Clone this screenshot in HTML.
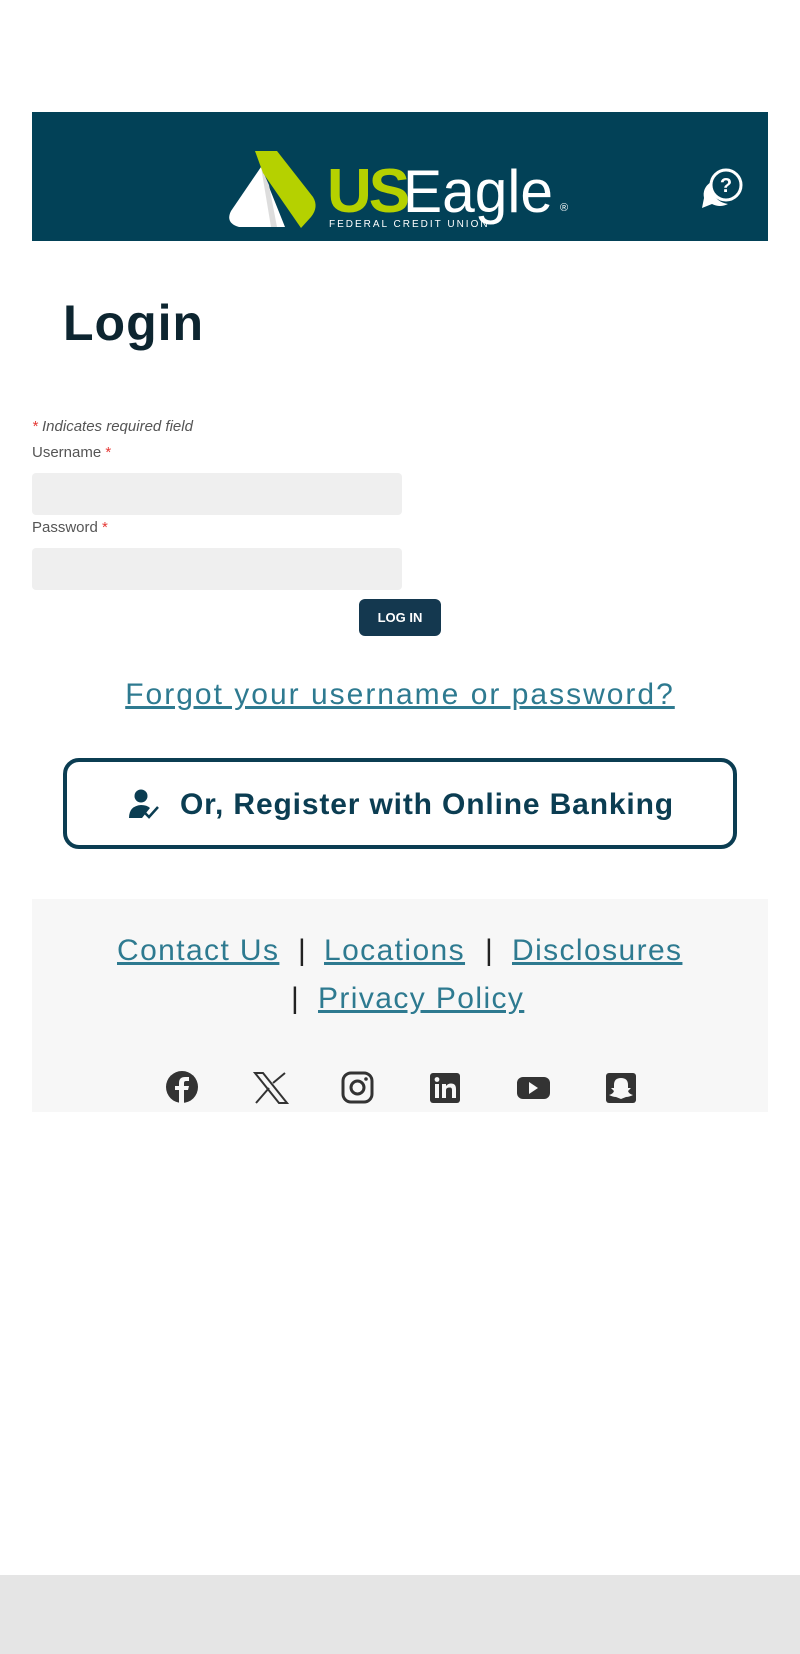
<!DOCTYPE html>
<html><head><meta charset="utf-8"><style>
*{margin:0;padding:0;box-sizing:border-box}
body{width:800px;height:1654px;background:#fff;font-family:"Liberation Sans",sans-serif;position:relative;overflow:hidden}
.abs{position:absolute}
.banner{left:32px;top:112px;width:736px;height:129px;background:#024157}
.login{left:63px;top:294px;font-size:50px;font-weight:bold;color:#0d2530;letter-spacing:1px}
.lbl{left:32px;font-size:15px;color:#555}
.req{color:#e53935}
.inp{left:32px;width:370px;height:42px;background:#efefef;border-radius:4px}
.btn{left:359px;top:599px;width:82px;height:37px;background:#14384f;border-radius:6px;color:#fff;font-size:13px;font-weight:bold;text-align:center;line-height:37px}
.forgot{left:0;width:800px;text-align:center;top:678px;font-size:30px;color:#2e7a90;text-decoration:underline;letter-spacing:2px}
.reg{left:63px;top:758px;width:674px;height:91px;border:4px solid #0b3d52;border-radius:16px}
.regt{left:180px;top:788px;font-size:30px;font-weight:bold;color:#0b3d52;letter-spacing:0.85px}
.foot{left:32px;top:899px;width:736px;height:213px;background:#f7f7f7}
.fl{font-size:30px;color:#2e7a90;text-decoration:underline;letter-spacing:1.4px}
.pipe{font-size:30px;color:#222}
.bottom{left:0;top:1575px;width:800px;height:79px;background:#e5e5e5}
</style></head><body>
<div class="abs banner"></div>
<svg class="abs" style="left:225px;top:145px" width="350" height="90" viewBox="0 0 350 90">
  <path d="M6 66 L36 22 L60 82 L14 82 Q0 78 6 66Z" fill="#fff"/>
  <path d="M36 22 L44 40 L52 82 L46 82Z" fill="#ddd"/>
  <path d="M30 6 L52 6 L88 52 Q94 62 86 72 L76 83 L38 28 Z" fill="#b5d100"/>
  <text x="102" y="67" font-family="Liberation Sans" font-weight="bold" font-size="62" fill="#b5d100" letter-spacing="-3">US</text>
  <text x="178" y="67" font-family="Liberation Sans" font-size="60" fill="#fff" textLength="150" lengthAdjust="spacingAndGlyphs">Eagle</text>
  <text x="104" y="82" font-family="Liberation Sans" font-size="10" fill="#fff" letter-spacing="2">FEDERAL CREDIT UNION</text>
  <text x="335" y="66" font-family="Liberation Sans" font-size="11" fill="#fff">®</text>
</svg>
<svg class="abs" style="left:700px;top:166px" width="46" height="46" viewBox="0 0 46 46">
  <circle cx="26" cy="19" r="15" fill="none" stroke="#fff" stroke-width="3"/>
  <path d="M11 16 Q2 22 4 32 L2 42 L12 38 Q20 42 28 38 Q16 36 13 26Z" fill="#fff"/>
  <text x="26" y="26" text-anchor="middle" font-family="Liberation Sans" font-weight="bold" font-size="20" fill="#fff">?</text>
</svg>
<div class="abs login">Login</div>
<div class="abs lbl" style="top:418px;font-style:italic"><span class="req">*</span> Indicates required field</div>
<div class="abs lbl" style="top:444px">Username <span class="req">*</span></div>
<div class="abs inp" style="top:473px"></div>
<div class="abs lbl" style="top:519px">Password <span class="req">*</span></div>
<div class="abs inp" style="top:548px"></div>
<div class="abs btn">LOG IN</div>
<div class="abs forgot">Forgot your username or password?</div>
<div class="abs reg"></div>
<svg class="abs" style="left:128px;top:788px" width="34" height="32" viewBox="0 0 34 32">
  <circle cx="13" cy="8" r="6.5" fill="#0b3d52"/>
  <path d="M1 30 Q1 18 13 17 Q19 17 22 20 L14 30Z" fill="#0b3d52"/>
  <path d="M17 25 L21 29 L30 19" fill="none" stroke="#0b3d52" stroke-width="2.5"/>
</svg>
<div class="abs regt">Or, Register with Online Banking</div>
<div class="abs foot"></div>
<div class="abs" style="left:117px;top:934px"><span class="fl">Contact Us</span></div>
<div class="abs pipe" style="left:298px;top:934px">|</div>
<div class="abs" style="left:324px;top:934px"><span class="fl">Locations</span></div>
<div class="abs pipe" style="left:485px;top:934px">|</div>
<div class="abs" style="left:512px;top:934px"><span class="fl">Disclosures</span></div>
<div class="abs pipe" style="left:291px;top:982px">|</div>
<div class="abs" style="left:318px;top:982px"><span class="fl">Privacy Policy</span></div>
<svg class="abs" style="left:166px;top:1071px" width="480" height="34" viewBox="0 0 480 34">
  <g fill="#333">
    <circle cx="16" cy="16" r="16"/>
    <path d="M18 33 L18 19 L22 19 L23 15 L18 15 L18 12 Q18 10 20 10 L23 10 L23 6 L19 6 Q13 6 13 12 L13 15 L9 15 L9 19 L13 19 L13 33Z" fill="#f7f7f7"/>
    <path d="M89 2 L97 2 L121 32 L113 32 Z" fill="none" stroke="#333" stroke-width="2"/>
    <path d="M90 32 L103 17 M107 12 L119 2" stroke="#333" stroke-width="2"/>
    <rect x="177" y="2" width="29" height="29" rx="8" fill="none" stroke="#333" stroke-width="3"/>
    <circle cx="191.5" cy="16.5" r="6.5" fill="none" stroke="#333" stroke-width="3"/>
    <circle cx="200" cy="8" r="1.8"/>
    <rect x="264" y="2" width="30" height="30" rx="3"/>
    <rect x="269" y="13" width="4" height="14" fill="#f7f7f7"/>
    <circle cx="271" cy="8.5" r="2.4" fill="#f7f7f7"/>
    <path d="M276 13 L280 13 L280 15 Q282 12.5 285 12.5 Q290 12.5 290 18 L290 27 L286 27 L286 19 Q286 16.5 284 16.5 Q280 16.5 280 19 L280 27 L276 27Z" fill="#f7f7f7"/>
    <rect x="351" y="6" width="33" height="22" rx="6"/>
    <path d="M363 11 L372 17 L363 23Z" fill="#f7f7f7"/>
    <rect x="440" y="2" width="30" height="30" rx="3"/>
    <path d="M455 7 Q462 7 462 14 L462 17 L465 17 L462 20 Q463 23 467 24 Q463 26 460 26 L455 28 L450 26 Q447 26 443 24 Q447 23 448 20 L445 17 L448 17 L448 14 Q448 7 455 7Z" fill="#f7f7f7"/>
  </g>
</svg>
<div class="abs bottom"></div>
</body></html>
